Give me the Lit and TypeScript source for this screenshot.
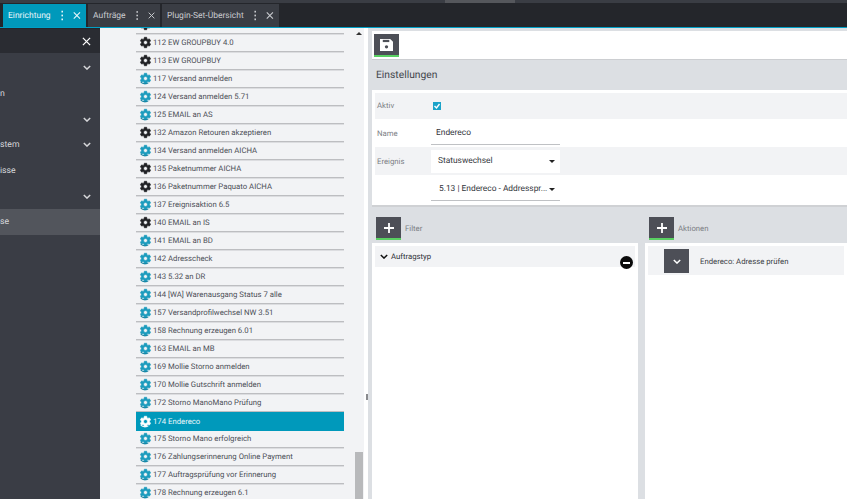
import { LitElement, html, css, svg } from 'lit'
import { customElement } from 'lit/decorators.js'

const gearPath = 'M19.14 12.94c.04-.3.06-.61.06-.94 0-.32-.02-.64-.07-.94l2.03-1.58c.18-.14.23-.41.12-.61l-1.92-3.32c-.12-.22-.37-.29-.59-.22l-2.39.96c-.5-.38-1.03-.7-1.62-.94l-.36-2.54c-.04-.24-.24-.41-.48-.41h-3.84c-.24 0-.43.17-.47.41l-.36 2.54c-.59.24-1.13.57-1.62.94l-2.39-.96c-.22-.08-.47 0-.59.22L2.74 8.87c-.12.21-.08.47.12.61l2.03 1.58c-.05.3-.09.63-.09.94s.02.64.07.94l-2.03 1.58c-.18.14-.23.41-.12.61l1.92 3.32c.12.22.37.29.59.22l2.39-.96c.5.38 1.03.7 1.62.94l.36 2.54c.05.24.24.41.48.41h3.84c.24 0 .44-.17.47-.41l.36-2.54c.59-.24 1.13-.56 1.62-.94l2.39.96c.22.08.47 0 .59-.22l1.92-3.32c.12-.22.07-.47-.12-.61l-2.01-1.58zM12 15.6c-1.98 0-3.6-1.62-3.6-3.6s1.62-3.6 3.6-3.6 3.6 1.62 3.6 3.6-1.62 3.6-3.6 3.6z'

// [label, plain gear?]
const rows: [string, boolean][] = [
  ['', true], // cut off by the top of the list
  ['112 EW GROUPBUY 4.0', true],
  ['113 EW GROUPBUY', true],
  ['117 Versand anmelden', false],
  ['124 Versand anmelden 5.71', false],
  ['125 EMAIL an AS', false],
  ['132 Amazon Retouren akzeptieren', true],
  ['134 Versand anmelden AICHA', false],
  ['135 Paketnummer AICHA', true],
  ['136 Paketnummer Paquato AICHA', true],
  ['137 Ereignisaktion 6.5', false],
  ['140 EMAIL an IS', true],
  ['141 EMAIL an BD', false],
  ['142 Adresscheck', false],
  ['143 5.32 an DR', false],
  ['144 [WA] Warenausgang Status 7 alle', false],
  ['157 Versandprofilwechsel NW 3.51', false],
  ['158 Rechnung erzeugen 6.01', false],
  ['163 EMAIL an MB', false],
  ['169 Mollie Storno anmelden', false],
  ['170 Mollie Gutschrift anmelden', false],
  ['172 Storno ManoMano Prüfung', false],
  ['174 Endereco', false],
  ['175 Storno Mano erfolgreich', false],
  ['176 Zahlungserinnerung Online Payment', false],
  ['177 Auftragsprüfung vor Erinnerung', false],
  ['178 Rechnung erzeugen 6.1', false]
]

const chevron = svg`<svg class="chev" viewBox="0 0 10 6" width="8" height="5"><path d="M1 1l4 4 4-4" fill="none" stroke="currentColor" stroke-width="1.8"/></svg>`
const cross = svg`<svg viewBox="0 0 10 10" width="9" height="9"><path d="M1 1l8 8M9 1l-8 8" fill="none" stroke="currentColor" stroke-width="1.4"/></svg>`
const dots = svg`<svg viewBox="0 0 3 11" width="3" height="11"><g fill="currentColor"><rect x=".5" y="0" width="2" height="2"/><rect x=".5" y="4.5" width="2" height="2"/><rect x=".5" y="9" width="2" height="2"/></g></svg>`
const plus = svg`<svg viewBox="0 0 10 10" width="10" height="10"><path d="M5 0v10M0 5h10" stroke="#fff" stroke-width="1.8"/></svg>`
const caret = svg`<svg viewBox="0 0 6 3" width="6" height="3"><path d="M0 0h6L3 3z" fill="#222"/></svg>`

@customElement('app-root')
export class AppRoot extends LitElement {
  static styles = css`
    :host {
      display: block;
      width: 847px;
      height: 499px;
      overflow: hidden;
      font-family: Roboto, sans-serif;
      font-size: 7.75px;
      text-rendering: geometricPrecision;
      color: #3c3f46;
      background: #dcdfe3;
    }
    .strip {
      height: 3px;
      background: #3a3d44;
      padding-left: 445px;
    }
    .strip div {
      width: 70px;
      height: 3px;
      background: #55575c;
    }
    .tabs {
      display: flex;
      align-items: flex-end;
      gap: 2px;
      height: 24px;
      background: #24262b;
      border-bottom: 1px solid #00a0c6;
      padding-left: 3px;
    }
    .tab {
      display: flex;
      align-items: center;
      height: 23px;
      box-sizing: border-box;
      background: #3a3d44;
      color: #c9cbcf;
      font-size: 8.5px;
      padding: 0 5px;
      white-space: nowrap;
    }
    .tab.on {
      background: #0099bb;
      color: #e8f6fa;
    }
    .tab span { flex: 1; }
    .tab svg:first-of-type { margin: 0 10px; }
    .main {
      display: flex;
      height: 471px;
    }
    .side {
      width: 100px;
      flex: none;
      background: #3a3d45;
      color: #d5d6d9;
      font-size: 8.7px;
      border-top: 1px solid #24262b;
    }
    .side-head {
      display: flex;
      justify-content: flex-end;
      align-items: center;
      height: 24px;
      margin-bottom: 2px;
      padding-right: 9px;
      background: #2a2c32;
      color: #fff;
    }
    .side-row {
      display: flex;
      justify-content: space-between;
      align-items: center;
      height: 25.7px;
      padding-right: 9px;
    }
    .side-row.sel { background: #52555c; height: 26px; }
    .chev { color: #d5d6d9; }
    .list {
      position: relative;
      width: 264px;
      flex: none;
      background: #f2f3f5;
      overflow: hidden;
      padding-left: 36px;
      box-sizing: border-box;
    }
    .list .row:first-child { margin-top: -13px; }
    .row {
      display: flex;
      align-items: center;
      gap: 1px;
      width: 208px;
      height: 18px;
      box-sizing: border-box;
      border-top: 1px solid #bdbec1;
      box-shadow: inset 0 1px 0 #dcdde0;
      padding-left: 3px;
      color: #4b4e55;
      white-space: nowrap;
    }
    .row.sel {
      position: relative;
      height: 20px;
      margin-bottom: -2px;
      padding-bottom: 1px;
      background: #0099bb;
      box-shadow: none;
      color: #eaf7fb;
    }
    .row svg { flex: none; }
    .scroll {
      position: absolute;
      left: 254px;
      top: 0;
      bottom: 0;
      width: 10px;
      display: flex;
      flex-direction: column;
      justify-content: space-between;
      align-items: center;
      padding-top: 4px;
      box-sizing: border-box;
    }
    .arrow {
      border: 3px solid transparent;
      border-top: 0;
      border-bottom: 3px solid #333;
    }
    .thumb {
      width: 8px;
      height: 47px;
      background: #b8b9bb;
    }
    .split {
      position: relative;
      width: 8px;
      flex: none;
      background: linear-gradient(90deg, #fff 50%, #dcdfe3 50%);
    }
    .grip {
      position: absolute;
      left: 2px;
      top: 366px;
      width: 2px;
      height: 6px;
      background: #8a8b8e;
    }
    .right {
      flex: 1;
      min-width: 0;
      padding-top: 3px;
    }
    .tool {
      background: #fff;
      height: 29px;
      box-sizing: border-box;
      padding: 3px 0 0 2px;
      border-bottom: 1px solid #ccced1;
    }
    .btn {
      display: flex;
      align-items: center;
      justify-content: center;
      width: 25px;
      height: 21px;
      background: #4d4f57;
      border-bottom: 2px solid #59d062;
      flex: none;
    }
    .title {
      height: 30px;
      line-height: 30px;
      font-size: 10.3px;
      padding-left: 4px;
      color: #44474d;
    }
    .form {
      background: #fff;
      padding: 3px 0 0 3px;
      height: 117px;
      box-sizing: border-box;
      border-bottom: 2px solid #cfd1d4;
    }
    .f {
      display: flex;
      align-items: center;
      color: #7b7e84;
      height: 28px;
      padding-left: 2px;
    }
    .f.grey { background: #f2f3f5; }
    .f.first { height: 26px; padding-bottom: 1px; box-sizing: border-box; }
    .f.last { height: 30px; align-items: flex-start; }
    .f label { width: 54px; flex: none; }
    .input {
      display: flex;
      align-items: center;
      justify-content: space-between;
      width: 129px;
      height: 26px;
      box-sizing: border-box;
      padding: 3px 5px 0 5px;
      font-size: 8.4px;
      color: #33363c;
      white-space: nowrap;
    }
    .name { align-self: flex-start; }
    .line { border-bottom: 1px solid #bfc1c4; }
    .white { background: #fff; height: 23px; padding: 0 5px 0 7px; }
    .last .input { padding-left: 8px; }
    .check {
      display: flex;
      align-items: center;
      justify-content: center;
      width: 8px;
      height: 8px;
      margin-left: 2px;
      background: #1ba3c9;
    }
    .cols {
      display: flex;
      gap: 7px;
    }
    .col-a { width: 266px; flex: none; }
    .col-b { flex: 1; min-width: 0; }
    .col-head {
      display: flex;
      align-items: center;
      gap: 4px;
      height: 36px;
      box-sizing: border-box;
      padding: 10px 0 3px 4px;
      color: #7b7e84;
    }
    .panel {
      background: #fff;
      height: 260px;
      padding: 3px;
    }
    .filter {
      position: relative;
      display: flex;
      align-items: center;
      gap: 3px;
      height: 21px;
      padding-left: 5px;
      box-sizing: border-box;
      background: #f2f3f5;
      color: #2f3238;
    }
    .minus {
      position: absolute;
      right: 2px;
      top: 10px;
      display: flex;
      align-items: center;
      justify-content: center;
      width: 13px;
      height: 13px;
      border-radius: 50%;
      background: #0b0b0b;
    }
    .minus i {
      width: 7px;
      height: 2px;
      background: #fff;
    }
    .action {
      display: flex;
      align-items: center;
      gap: 11px;
      height: 29px;
      padding: 1px 0 0 16px;
      box-sizing: border-box;
      background: #f2f3f5;
      color: #3c3f46;
    }
    .act-btn {
      display: flex;
      align-items: center;
      justify-content: center;
      width: 25px;
      height: 24px;
      background: #4d4f57;
    }
    .act-btn .chev { color: #fff; }
    .filter .chev { color: #111; }
  `

  gear (plain: boolean, sel: boolean) {
    const c = sel ? '#fff' : plain ? '#1f2024' : '#1b9bbd'
    return svg`<svg viewBox="0 0 24 24" width="13" height="13">
      <path d=${gearPath} fill=${c} stroke=${c} stroke-width="1.2"/>
      ${plain ? '' : svg`<path d="M3 18c3 4 10 5 14 2" fill="none" stroke=${sel ? '#fff' : '#0f7f9e'} stroke-width="2"/>`}
    </svg>`
  }

  render () {
    return html`
      <div class="strip"><div></div></div>
      <div class="tabs">
        <div class="tab on" style="width:83px"><span>Einrichtung</span>${dots}${cross}</div>
        <div class="tab" style="width:72px"><span>Aufträge</span>${dots}${cross}</div>
        <div class="tab" style="width:117px"><span>Plugin-Set-Übersicht</span>${dots}${cross}</div>
      </div>
      <div class="main">
        <div class="side">
          <div class="side-head">${cross}</div>
          <div class="side-row"><span></span>${chevron}</div>
          <div class="side-row"><span>n</span></div>
          <div class="side-row"><span></span>${chevron}</div>
          <div class="side-row"><span>stem</span>${chevron}</div>
          <div class="side-row"><span>isse</span></div>
          <div class="side-row"><span></span>${chevron}</div>
          <div class="side-row sel"><span>se</span></div>
        </div>
        <div class="list">
          ${rows.map(([label, plain]) => {
            const sel = label === '174 Endereco'
            return html`<div class="row ${sel ? 'sel' : ''}">${this.gear(plain, sel)}<span>${label}</span></div>`
          })}
          <div class="scroll"><div class="arrow"></div><div class="thumb"></div></div>
        </div>
        <div class="split"><div class="grip"></div></div>
        <div class="right">
          <div class="tool">
            <div class="btn">
              <svg viewBox="0 0 14 14" width="13" height="13"><path d="M0 1h11l3 3v10H0z" fill="#fff"/><rect x="3" y="2" width="7" height="2.4" fill="#4d4f57"/><circle cx="7" cy="9.5" r="1.8" fill="#4d4f57"/></svg>
            </div>
          </div>
          <div class="title">Einstellungen</div>
          <div class="form">
            <div class="f grey first">
              <label>Aktiv</label>
              <div class="check"><svg viewBox="0 0 8 8" width="8" height="8"><path d="M1.5 4l2 2 3-4" fill="none" stroke="#fff" stroke-width="1.4"/></svg></div>
            </div>
            <div class="f"><label>Name</label><div class="input line name">Endereco</div></div>
            <div class="f grey"><label>Ereignis</label><div class="input white">Statuswechsel ${caret}</div></div>
            <div class="f last"><label></label><div class="input line">5.13 | Endereco - Addresspr... ${caret}</div></div>
          </div>
          <div class="cols">
            <div class="col-a">
              <div class="col-head"><div class="btn">${plus}</div>Filter</div>
              <div class="panel">
                <div class="filter">${chevron}Auftragstyp<div class="minus"><i></i></div></div>
              </div>
            </div>
            <div class="col-b">
              <div class="col-head"><div class="btn">${plus}</div>Aktionen</div>
              <div class="panel">
                <div class="action"><div class="act-btn">${chevron}</div>Endereco: Adresse prüfen</div>
              </div>
            </div>
          </div>
        </div>
      </div>
    `
  }
}
